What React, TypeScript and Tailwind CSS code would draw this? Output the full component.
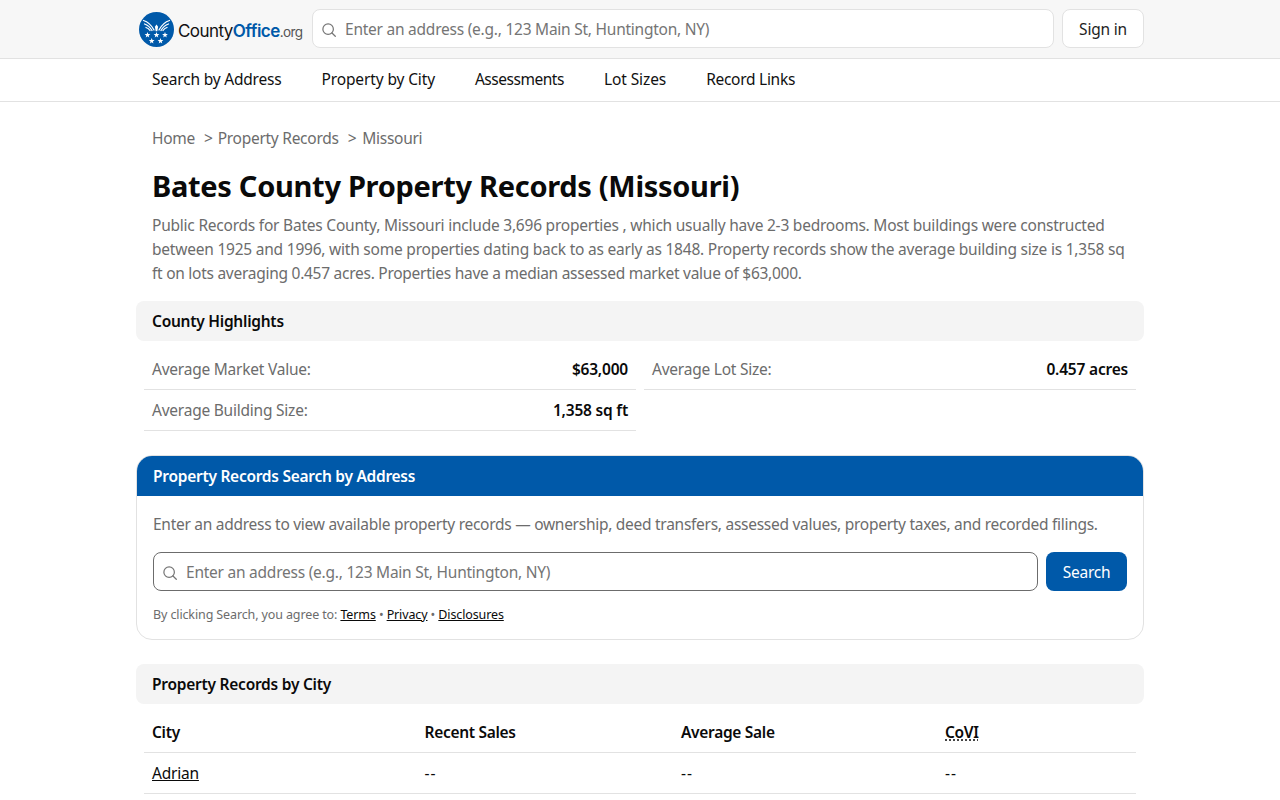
import React from "react";

const font = { fontFamily: '"Noto Sans", sans-serif' };

function SearchIcon({ size = 14 }: { size?: number }) {
  return (
    <svg width={size} height={size} viewBox="0 0 16 16" fill="none" stroke="#757575" strokeWidth="1.4" strokeLinecap="round" className="shrink-0">
      <circle cx="7" cy="7" r="6" />
      <path d="M11.4 11.4 15.2 15.2" />
    </svg>
  );
}

function Logo() {
  const star = (cx: number, cy: number, r: number) => {
    const pts: string[] = [];
    for (let i = 0; i < 10; i++) {
      const rad = i % 2 === 0 ? r : r * 0.42;
      const a = -Math.PI / 2 + (i * Math.PI) / 5;
      pts.push(`${(cx + rad * Math.cos(a)).toFixed(2)},${(cy + rad * Math.sin(a)).toFixed(2)}`);
    }
    return <polygon key={`${cx}-${cy}`} points={pts.join(" ")} fill="#fff" />;
  };
  return (
    <svg width="35" height="35" viewBox="0 0 35 35" className="shrink-0">
      <circle cx="17.5" cy="17.5" r="17.5" fill="#0059a9" />
      <g fill="none" stroke="#fff" strokeWidth="1.3" strokeLinecap="round">
        <path d="M4.500 8.500C8 9.500 12 12.500 15 18" />
        <path d="M5.500 12C8.500 13 11 15 13 18.500" />
        <path d="M7 15.500C8.500 16 10 17 11 18.500" />
        <path d="M30.500 8.500C27 9.500 23 12.500 20 18" />
        <path d="M29.500 12C26.500 13 24 15 22 18.500" />
        <path d="M28 15.500C26.500 16 25 17 24 18.500" />
      </g>
      <path d="M17.500 12.500l1.600 2.200-.8 4.500h-1.600l-.8-4.500Z" fill="#fff" />
      {star(8.500, 23, 3)}
      {star(17.500, 23, 3)}
      {star(26, 23, 3)}
      {star(12.700, 29, 3)}
      {star(21.500, 29, 3)}
    </svg>
  );
}

function SectionBar({ children }: { children: React.ReactNode }) {
  return (
    <div className="h-10 rounded-lg bg-[#f4f4f4] px-4 pt-[2px] flex items-center text-[15.5px] font-semibold text-[#0a0a0a] tracking-[-0.25px]">
      {children}
    </div>
  );
}

function Stat({ label, value }: { label: string; value: string }) {
  return (
    <div className="h-[41px] border-b border-[#e2e2e2] px-2 pt-[2px] flex items-center justify-between text-[15.5px]">
      <span className="text-[#6c6c6c] tracking-[-0.23px]">{label}</span>
      <span className="font-semibold text-[#0a0a0a] tracking-[-0.2px]">{value}</span>
    </div>
  );
}

const Row = "grid grid-cols-[272.5px_256.5px_264px_1fr] h-[41px] pt-[2px] items-center border-b border-[#e2e2e2] text-[15.5px]";

export default function App() {
  return (
    <div style={font} className="h-[800px] overflow-hidden bg-white text-[#0a0a0a] tracking-[-0.2px]">
      <header className="h-[59px] bg-[#f7f7f7] border-b border-[#e2e2e2]">
        <div className="w-[1008px] mx-auto h-[58px] pb-[1px] flex items-center">
          <div className="flex items-center w-[176px] shrink-0 pl-[3px] pt-[2px]">
            <Logo />
            <span className="ml-1 pt-[5px] text-[17px] tracking-[-0.55px] whitespace-nowrap" style={{ fontFamily: '"Inter", sans-serif' }}>
              <span className="text-[#111]">County</span>
              <span className="text-[#0059a9] font-semibold">Office</span>
              <span className="text-[#555] text-[13.5px]">.org</span>
            </span>
          </div>
          <div className="w-[742px] h-[39px] pt-[2px] rounded-lg border border-[#e2e2e2] bg-white flex items-center pl-[9px] gap-[9px]">
            <SearchIcon />
            <span className="text-[15.5px] text-[#757575] whitespace-nowrap tracking-[-0.24px]">Enter an address (e.g., 123 Main St, Huntington, NY)</span>
          </div>
          <div className="ml-2 w-[82px] h-[39px] pt-[2px] rounded-lg border border-[#e2e2e2] bg-white flex items-center justify-center text-[15.5px] text-[#1f1f1f]">
            Sign in
          </div>
        </div>
      </header>

      <nav className="h-[43px] border-b border-[#e2e2e2]">
        <div className="w-[1008px] mx-auto h-[42px] flex items-center px-4 gap-10 text-[15.5px] text-[#111]">
          <span className="whitespace-nowrap">Search by Address</span>
          <span className="whitespace-nowrap tracking-[-0.13px]">Property by City</span>
          <span className="whitespace-nowrap tracking-[-0.47px]">Assessments</span>
          <span className="whitespace-nowrap tracking-[-0.1px]">Lot Sizes</span>
          <span className="whitespace-nowrap tracking-[-0.28px]">Record Links</span>
        </div>
      </nav>

      <main className="w-[1008px] mx-auto">
        <div className="mt-[25px] px-4 h-6 flex items-center text-[15.5px] text-[#6c6c6c] tracking-[-0.27px]">
          <span>Home</span>
          <span className="ml-[9px] mr-[5px]">&gt;</span>
          <span>Property Records</span>
          <span className="ml-[9px] mr-[6px]">&gt;</span>
          <span>Missouri</span>
        </div>

        <h1 className="mt-[17px] px-4 text-[29px] leading-[36px] font-bold text-[#0a0a0a] tracking-[-0.3px]">
          Bates County Property Records (Missouri)
        </h1>

        <p className="mt-[9px] px-4 text-[15.5px] leading-6 text-[#6c6c6c] whitespace-nowrap">
          <span className="block tracking-[-0.225px]">Public Records for Bates County, Missouri include 3,696 properties , which usually have 2-3 bedrooms. Most buildings were constructed</span>
          <span className="block tracking-[-0.22px]">between 1925 and 1996, with some properties dating back to as early as 1848. Property records show the average building size is 1,358 sq</span>
          <span className="block tracking-[-0.267px]">ft on lots averaging 0.457 acres. Properties have a median assessed market value of $63,000.</span>
        </p>

        <div className="mt-4">
          <SectionBar>County Highlights</SectionBar>
        </div>

        <div className="grid grid-cols-2 px-2 gap-x-2 mt-2">
          <Stat label="Average Market Value:" value="$63,000" />
          <Stat label="Average Lot Size:" value="0.457 acres" />
          <Stat label="Average Building Size:" value="1,358 sq ft" />
        </div>

        <section className="mt-6 h-[185px] rounded-2xl border border-[#e2e2e2] overflow-hidden">
          <div className="h-[40px] bg-[#0059a9] px-4 pt-[1px] flex items-center text-[15.5px] font-semibold text-white tracking-[-0.27px]">
            Property Records Search by Address
          </div>
          <div className="px-4">
            <p className="mt-4 text-[15.5px] leading-6 text-[#6c6c6c] whitespace-nowrap tracking-[-0.275px]">
              Enter an address to view available property records — ownership, deed transfers, assessed values, property taxes, and recorded filings.
            </p>
            <div className="mt-4 flex gap-2">
              <div className="flex-1 h-[39px] pt-[2px] rounded-lg border border-[#6c6c6c] flex items-center pl-[9px] gap-[9px]">
                <SearchIcon />
                <span className="text-[15.5px] text-[#757575] whitespace-nowrap tracking-[-0.24px]">Enter an address (e.g., 123 Main St, Huntington, NY)</span>
              </div>
              <div className="w-[81px] h-[39px] pt-[2px] rounded-lg bg-[#0059a9] flex items-center justify-center text-[15.5px] text-white tracking-[-0.25px]">
                Search
              </div>
            </div>
            <p className="mt-[15px] text-[12.5px] leading-[18px] text-[#6c6c6c] whitespace-nowrap tracking-[-0.12px]">
              By clicking Search, you agree to: <a className="text-[#0a0a0a] underline">Terms</a> • <a className="text-[#0a0a0a] underline">Privacy</a> • <a className="text-[#0a0a0a] underline">Disclosures</a>
            </p>
          </div>
        </section>

        <div className="mt-6">
          <SectionBar>Property Records by City</SectionBar>
        </div>

        <div className="mt-2 px-2">
          <div className={Row + " font-semibold tracking-[-0.3px]"}>
            <span className="pl-2">City</span>
            <span className="pl-2">Recent Sales</span>
            <span className="pl-2">Average Sale</span>
            <span className="pl-2"><span className="underline decoration-dotted underline-offset-1">CoVI</span></span>
          </div>
          <div className={Row}>
            <span className="pl-2"><a className="underline">Adrian</a></span>
            <span className="pl-2 tracking-[1px]">--</span>
            <span className="pl-2 tracking-[1px]">--</span>
            <span className="pl-2 tracking-[1px]">--</span>
          </div>
        </div>
      </main>
    </div>
  );
}
